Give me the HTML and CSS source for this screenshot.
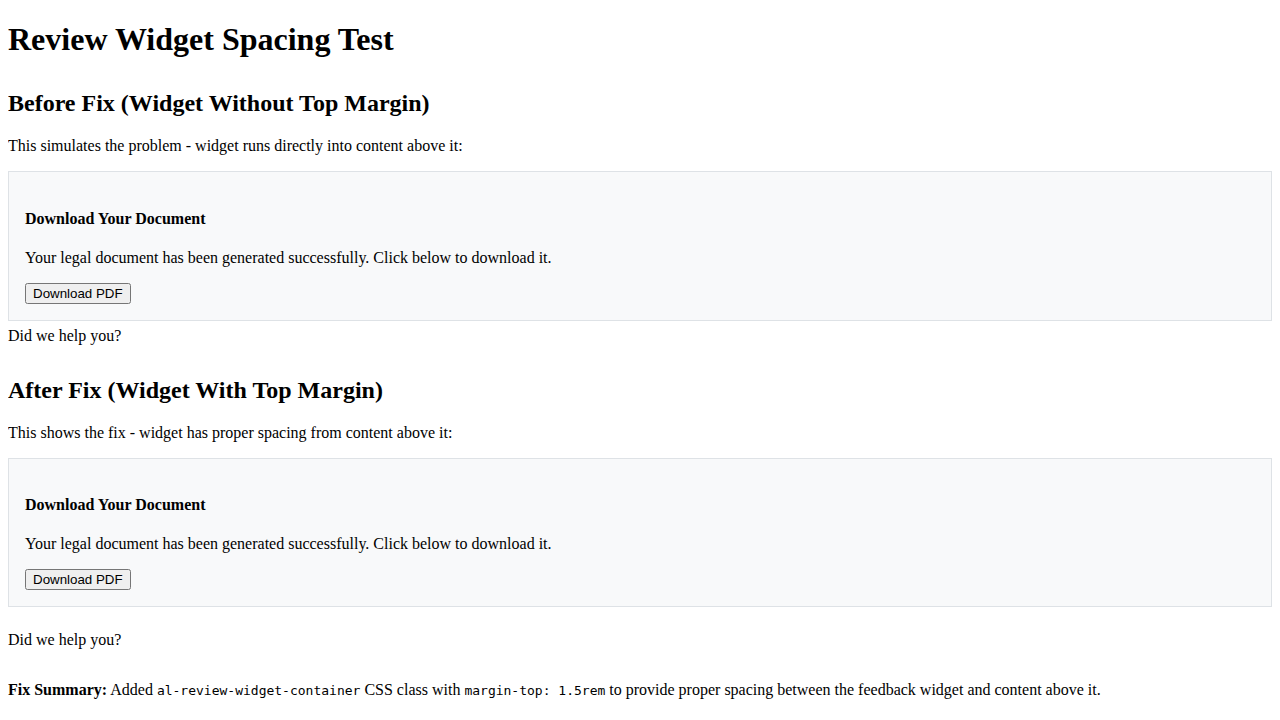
FILE: index.html
```html
<!DOCTYPE html>
<html>
<head>
<meta charset="utf-8">
<title>Review Widget Spacing Test</title>
<link rel="stylesheet" href="styles.css">
</head>
<body>
<h1>Review Widget Spacing Test</h1>

<h2>Before Fix (Widget Without Top Margin)</h2>
<p>This simulates the problem - widget runs directly into content above it:</p>
<div class="widget">
  <h4>Download Your Document</h4>
  <p>Your legal document has been generated successfully. Click below to download it.</p>
  <button type="button" class="btn">Download PDF</button>
</div>
<div class="review review-before">Did we help you?</div>

<h2>After Fix (Widget With Top Margin)</h2>
<p>This shows the fix - widget has proper spacing from content above it:</p>
<div class="widget">
  <h4>Download Your Document</h4>
  <p>Your legal document has been generated successfully. Click below to download it.</p>
  <button type="button" class="btn">Download PDF</button>
</div>
<div class="review al-review-widget-container">Did we help you?</div>

<p class="summary"><strong>Fix Summary:</strong> Added <code>al-review-widget-container</code> CSS class with <code>margin-top: 1.5rem</code> to provide proper spacing between the feedback widget and content above it.</p>
</body>
</html>
```

FILE: styles.css
```css
body {
  margin: 0 8px 8px;
  font-family: "Liberation Serif", "Times New Roman", serif;
  font-size: 16px;
  color: #000;
  background: #fff;
}

h2 {
  margin-top: 2rem;
}

.widget {
  background: #f8f9fa;
  border: 1px solid #dee2e6;
  padding: 16px;
}

.btn {
  font-family: "Liberation Sans", Arial, sans-serif;
  font-size: 13.333px;
}

.review-before {
  margin-top: 6px;
}

.al-review-widget-container {
  margin-top: 1.5rem;
}

.summary {
  margin-top: 2rem;
}

code {
  font-family: "DejaVu Sans Mono", monospace;
  font-size: 13px;
}
```
